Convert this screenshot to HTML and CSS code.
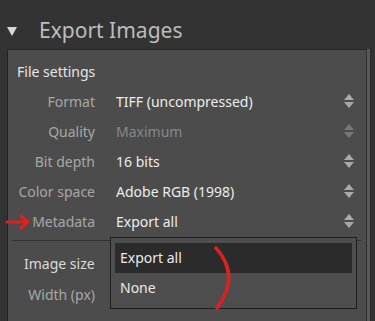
FILE: index.html
```html
<!DOCTYPE html>
<html>
<head lang="en">
    <meta charset="UTF-8">
    <title>Export Images</title>
    <link rel="stylesheet" href="styles.css">
</head>
<body>
    <div class="wrap">
        <header>
            <span class="tri"></span>
            <span class="title">Export Images</span>
        </header>
        <div class="body">
            <section class="panel">
                <h3>File settings</h3>
                <div class="row">
                    <label>Format</label>
                    <span class="val">TIFF (uncompressed)</span>
                    <i class="spin"></i>
                </div>
                <div class="row">
                    <label>Quality</label>
                    <span class="val off">Maximum</span>
                    <i class="spin off"></i>
                </div>
                <div class="row">
                    <label>Bit depth</label>
                    <span class="val">16 bits</span>
                    <i class="spin"></i>
                </div>
                <div class="row">
                    <label>Color space</label>
                    <span class="val">Adobe RGB (1998)</span>
                    <i class="spin"></i>
                </div>
                <div class="row">
                    <label>Metadata</label>
                    <span class="val">Export all</span>
                    <i class="spin"></i>
                </div>
                <hr>
                <div class="row sub">
                    <label>Image size</label>
                </div>
                <div class="row">
                    <label>Width (px)</label>
                </div>

                <ul class="menu">
                    <li class="on">Export all</li>
                    <li>None</li>
                </ul>
                <svg class="arrow" width="28" height="16" viewBox="0 0 28 16">
                    <path d="M2 8 H22 M16 2 L23 8 L16 14" fill="none" stroke="#e02020" stroke-width="3" stroke-linecap="round" stroke-linejoin="round"/>
                </svg>
                <svg class="curve" width="24" height="66" viewBox="0 0 24 66">
                    <path d="M3 2 Q28 30 4 62" fill="none" stroke="#e02020" stroke-width="3.5" stroke-linecap="round"/>
                </svg>
            </section>
            <div class="bar"></div>
        </div>
    </div>
</body>
</html>
```
FILE: styles.css
```css
* {
    margin: 0;
    padding: 0;
    list-style: none;
}
html,body{
    height:100%;
    overflow:hidden;
}
body{
    background:#333;
    font-family:"Noto Sans","Open Sans",sans-serif;
    font-size:14px;
}
.wrap header{
    height:49px;
    display:flex;
    align-items:center;
    padding-left:7px;
    box-sizing:border-box;
    padding-top:11px;
}
.tri{
    width:0;
    height:0;
    border-left:5px solid transparent;
    border-right:5px solid transparent;
    border-top:9px solid #d8d8d8;
    margin-top:2px;
}
.title{
    margin-left:22px;
    font-size:21px;
    color:#bdbdbd;
}
.body{
    display:flex;
    height:272px;
    padding-left:7px;
}
.panel{
    position:relative;
    flex:1;
    background:#4c4c4c;
    border-top:1px solid #242424;
    border-left:1px solid #242424;
    border-right:1px solid #2e2e2e;
}
.bar{
    width:3px;
    margin-right:4px;
    background:#595959;
    border-right:1px solid #2a2a2a;
}
.panel h3{
    font-weight:normal;
    font-size:14px;
    color:#e6e6e6;
    padding:12px 0 0 9px;
    height:24px;
    line-height:20px;
}
.row{
    display:flex;
    align-items:center;
    height:30px;
}
.row label{
    width:87px;
    text-align:right;
    color:#a8a8a8;
}
.val{
    flex:1;
    margin-left:21px;
    color:#ececec;
}
.val.off{
    color:#888;
}
.spin{
    position:relative;
    width:10px;
    height:16px;
    margin-right:12px;
}
.spin:before,.spin:after{
    content:'';
    position:absolute;
    left:0;
    border-left:5px solid transparent;
    border-right:5px solid transparent;
}
.spin:before{
    top:1px;
    border-bottom:6px solid #a9a9a9;
}
.spin:after{
    bottom:1px;
    border-top:6px solid #a9a9a9;
}
.spin.off:before{
    border-bottom-color:#777;
}
.spin.off:after{
    border-top-color:#777;
}
.panel hr{
    border:0;
    border-top:1px solid #333;
    margin:4px 5px 6px 4px;
}
.row.sub label{
    width:auto;
    text-align:left;
    margin-left:16px;
    color:#dcdcdc;
}
.row.sub{
    height:32px;
}
.menu{
    position:absolute;
    left:102px;
    top:187px;
    width:237px;
    padding:5px 4px;
    background:#4e4e4e;
    border:1px solid #1e1e1e;
}
.menu li{
    height:30px;
    line-height:30px;
    padding-left:5px;
    color:#eaeaea;
}
.menu li.on{
    background:#2b2b2b;
}
.arrow{
    position:absolute;
    left:-3px;
    top:164px;
}
.curve{
    position:absolute;
    left:205px;
    top:196px;
}
```
